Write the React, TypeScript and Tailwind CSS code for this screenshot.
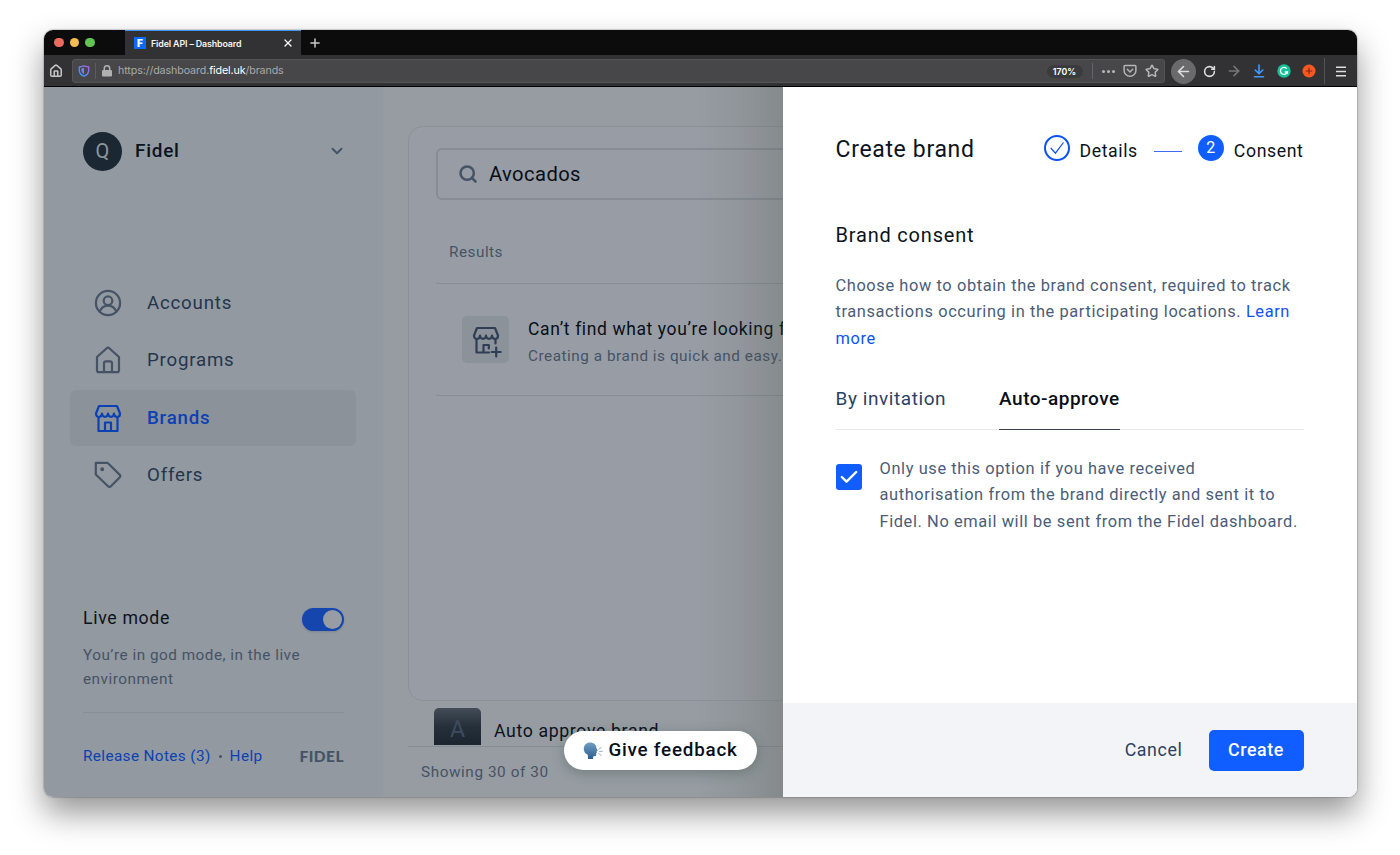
import React from "react";
import { ChevronDown, House, Plus, X, Star, ArrowLeft, ArrowRight, RotateCw, Search } from "lucide-react";

const stroke = {
  fill: "none",
  stroke: "currentColor",
  strokeWidth: 2.2,
  strokeLinecap: "round" as const,
  strokeLinejoin: "round" as const,
};

function StoreIcon({ plus = false }: { plus?: boolean }) {
  return (
    <svg viewBox="0 0 28 28" className="size-7 overflow-visible" {...stroke}>
      <path d="M5 2h18l3 7.500c0 2.200-1.200 3.500-2.900 3.500-1.800 0-2.900-1.200-3.100-3.500-.200 2.300-1.300 3.300-3 3.300s-2.800-1-3-3.300c-.200 2.300-1.300 3.300-3 3.300s-2.800-1-3-3.300C7.800 11.800 6.700 13 4.900 13 3.200 13 2 11.700 2 9.500z" />
      {plus ? (
        <path d="M4.500 14v12.500H17M23.500 14v3.500M11.500 26.500V19h5.300v3.500M24.200 21.500v9M19.700 26h9" />
      ) : (
        <path d="M4.500 14v13h19V14M11 27v-8.500h6V27" />
      )}
    </svg>
  );
}

function AccountIcon() {
  return (
    <svg viewBox="0 0 28 28" className="size-7" {...stroke}>
      <circle cx="14" cy="14" r="12.100" />
      <circle cx="14" cy="11.700" r="4.300" />
      <path d="M5.600 22.500c1.800-3.800 4.800-5.800 8.400-5.800s6.600 2 8.400 5.800" />
    </svg>
  );
}

function HomeIcon() {
  return (
    <svg viewBox="0 0 28 28" className="size-7" {...stroke}>
      <path d="M3 11 12.700 2.200a2 2 0 0 1 2.600 0L25 11V24.200a2 2 0 0 1-2 2H5a2 2 0 0 1-2-2z" />
      <path d="M10 26v-8.700a2 2 0 0 1 2-2h4a2 2 0 0 1 2 2V26" />
    </svg>
  );
}

function TagIcon() {
  return (
    <svg viewBox="0 0 28 28" className="size-7" {...stroke}>
      <path d="M1.800 1.800h11.700L25.600 13.600a2 2 0 0 1 0 2.800l-8.700 8.900a2 2 0 0 1-2.900 0L1.800 13.500z" />
      <circle cx="8.200" cy="8.200" r="1.200" fill="currentColor" strokeWidth="1.500" />
    </svg>
  );
}

function ShieldIcon() {
  return (
    <svg viewBox="0 0 12 12" className="size-3">
      <defs>
        <linearGradient id="shield" x1="1" y1="0" x2="0" y2="1">
          <stop offset="0" stopColor="#b35cf0" />
          <stop offset="1" stopColor="#28a5ff" />
        </linearGradient>
      </defs>
      <path d="M6 .9 10.700 2v3.200c0 2.800-1.800 4.800-4.700 6-2.900-1.200-4.700-3.200-4.700-6V2z" fill="none" stroke="url(#shield)" strokeWidth="1.400" />
      <path d="M6 3v6C4.300 8 3.400 6.800 3.400 5V3.500z" fill="#7a83f5" />
    </svg>
  );
}

function PocketIcon() {
  return (
    <svg viewBox="0 0 14 14" className="size-[14px]" fill="none" stroke="currentColor" strokeWidth="1.500" strokeLinecap="round" strokeLinejoin="round">
      <path d="M2 1.500h10c.500 0 .9.400.9.900v4a5.900 5.900 0 0 1-11.800 0v-4c0-.5.400-.9.900-.9zM4.300 5.300 7 8l2.700-2.700" />
    </svg>
  );
}

function SpeakingHead() {
  return (
    <svg viewBox="0 0 20 18" className="h-[18px] w-5">
      <defs>
        <linearGradient id="head" x1="0" y1="0" x2="0" y2="1">
          <stop offset="0" stopColor="#6f9dc3" />
          <stop offset="1" stopColor="#2d5f8e" />
        </linearGradient>
      </defs>
      <path d="M7 .5c3.800 0 6.200 2.200 6.300 5.200l1.400 3-1.100.7.200 1.300-.7.500.2 1.900c-.1 1.100-1.700 1.200-3 1.100l-.3 2.800H5l-.2-4.300C2.300 11.500.8 9.500.8 6.900.8 3 3.500.5 7 .5z" fill="url(#head)" />
      <path d="m15.800 7.200 2.400-1.600M16.300 9.400h3M15.800 11.600l2.400 1.700" stroke="#8fa6bb" strokeWidth=".9" strokeLinecap="round" />
    </svg>
  );
}

function TitleBar() {
  return (
    <div className="flex h-[25px] shrink-0 bg-[#0c0c0d]">
      <div className="flex w-[81px] items-center gap-1.5 pl-[10px]">
        <i className="size-[9.500px] rounded-full bg-[#ee6a5f]" />
        <i className="size-[9.500px] rounded-full bg-[#f5bd4f]" />
        <i className="size-[9.500px] rounded-full bg-[#61c454]" />
      </div>
      <div className="flex w-[176px] items-center border-t-[1.500px] border-[#3f97f5] bg-[#323234] pr-[7px] pl-[9px]">
        <div className="flex size-3 items-center justify-center bg-[#0a6cff] text-[10px] leading-3 font-black text-white">F</div>
        <span className="ml-[5px] pt-px text-[8.900px] font-semibold tracking-[-0.015em] text-[#f4f4f5]">Fidel API – Dashboard</span>
        <X className="ml-auto size-3 text-white" strokeWidth={2.600} />
      </div>
      <div className="flex items-center pl-[7px]">
        <Plus className="size-[14px] text-[#c9c9ca]" strokeWidth={2.600} />
      </div>
    </div>
  );
}

function ToolBar() {
  return (
    <div className="flex h-8 shrink-0 items-center border-b border-black bg-[#323234] pt-px text-[#c4c4c5]">
      <House className="ml-[5px] size-[14px]" strokeWidth={2.700} />
      <div className="ml-[9px] flex h-6 w-[1092.500px] items-center rounded-[3px] border border-[#555557] bg-[#474749]">
        <span className="ml-[5px] flex">
          <ShieldIcon />
        </span>
        <i className="ml-[5px] h-4 w-px bg-[#5d5d60]" />
        <svg viewBox="0 0 10 12" className="ml-[6px] h-3 w-[10px]" fill="#b0b0b1">
          <rect x="0" y="5" width="10" height="6.500" rx="1.200" />
          <path d="M2.300 6V3.500a2.700 2.700 0 0 1 5.400 0V6" fill="none" stroke="#b0b0b1" strokeWidth="1.500" />
        </svg>
        <span className="ml-[6px] pt-px text-[10.700px] tracking-[-0.010em] text-[#a8a8aa]">
          https://dashboard.<span className="text-white">fidel.uk</span>/brands
        </span>
        <span className="ml-auto flex h-[13px] w-9 items-center justify-center rounded-full bg-[#3b3b3d] pt-px text-[8.800px] font-semibold text-white">170%</span>
        <i className="ml-[9px] h-4 w-px bg-[#5e6673]" />
        <span className="ml-[9px] flex gap-[2px]">
          <i className="size-[3px] rounded-full bg-[#b4b4b5]" />
          <i className="size-[3px] rounded-full bg-[#b4b4b5]" />
          <i className="size-[3px] rounded-full bg-[#b4b4b5]" />
        </span>
        <span className="ml-2 flex text-[#b4b4b5]">
          <PocketIcon />
        </span>
        <Star className="mr-[5px] ml-2 size-[14px] text-[#b4b4b5]" strokeWidth={2.600} />
      </div>
      <div className="ml-1.5 flex size-[25px] items-center justify-center rounded-full bg-[#6a6a6c]">
        <ArrowLeft className="size-[17px] text-[#dddddd]" strokeWidth={2.300} />
      </div>
      <RotateCw className="ml-[7px] size-[13px] text-[#dcdcdc]" strokeWidth={2.900} />
      <ArrowRight className="ml-[10px] size-4 text-[#77777a]" strokeWidth={2.300} />
      <svg viewBox="0 0 12 14" className="ml-[11px] h-[14px] w-3" fill="none" stroke="#3f9bfd" strokeWidth="1.600" strokeLinecap="round" strokeLinejoin="round">
        <path d="M6 1v8.500M2.200 6 6 9.800 9.800 6M1.500 12.800h9" />
      </svg>
      <svg viewBox="0 0 14 14" className="ml-3 size-[14px]">
        <circle cx="7" cy="7" r="6.700" fill="#15c39a" />
        <path d="M9.600 4.600A3.500 3.500 0 1 0 10.300 8H7.800M10.400 8v1.700" fill="none" stroke="#fff" strokeWidth="1.300" />
      </svg>
      <svg viewBox="0 0 14 14" className="ml-[11px] size-[14px]">
        <circle cx="7" cy="7" r="6.500" fill="#ff5722" />
        <path d="M7 3.700v6.600M3.700 7h6.600" stroke="#7c2a12" strokeWidth="1.200" />
      </svg>
      <i className="ml-2 h-[26px] w-px bg-[#545456]" />
      <svg viewBox="0 0 10 11" className="ml-[11px] h-[11px] w-[10px]" stroke="#dcdcdc" strokeWidth="1.500">
        <path d="M0 1.200h10M0 5.500h10M0 9.800h10" />
      </svg>
    </div>
  );
}

const navItems = [
  { label: "Accounts", icon: <AccountIcon />, active: false },
  { label: "Programs", icon: <HomeIcon />, active: false },
  { label: "Brands", icon: <StoreIcon />, active: true },
  { label: "Offers", icon: <TagIcon />, active: false },
];

function Sidebar() {
  return (
    <aside className="flex w-[339px] shrink-0 flex-col bg-[#9299a0] px-[39px] pt-[44px]">
      <div className="flex h-10 items-center">
        <div className="flex size-[39px] items-center justify-center rounded-full bg-[#1b2733] text-[20px] text-[#8f969e]">Q</div>
        <span className="ml-[13px] text-[18.900px] font-medium tracking-[0.040em] text-[#0b1320]">Fidel</span>
        <ChevronDown className="-mr-[1.500px] ml-auto size-[18px] text-[#46546a]" strokeWidth={2.700} />
      </div>
      <nav className="mt-[104px] -mr-[26px] -ml-[13px] flex w-[286px] flex-col gap-[1px]">
        {navItems.map((item) => (
          <a
            key={item.label}
            className={
              item.active
                ? "flex h-[56.300px] items-center rounded-md bg-[#8b9299] pl-6 font-medium text-[#0c41b4]"
                : "flex h-[56.300px] items-center rounded-md pl-6 text-[#25364c]"
            }
          >
            <span className={item.active ? "flex" : "flex text-[#465366]"}>{item.icon}</span>
            <span className="ml-[25px] text-[18.700px] tracking-[0.042em]">{item.label}</span>
          </a>
        ))}
      </nav>
      <div className="mt-[103px] flex h-6 items-center justify-between">
        <span className="text-[17.700px] tracking-[0.038em] text-[#0b1320]">Live mode</span>
        <div className="mt-[2px] flex h-[23px] w-[42px] items-center justify-end rounded-full bg-[#1546ad] p-[2px] shadow-sm">
          <i className="size-[19px] rounded-full bg-[#989da5]" />
        </div>
      </div>
      <p className="mt-[12.500px] text-[15.300px] leading-[24.600px] tracking-[0.033em] whitespace-nowrap text-[#465366]">
        You’re in god mode, in the live
        <br />
        environment
      </p>
      <div className="mt-[20.500px] h-px w-[261px] bg-[#868e97]" />
      <div className="mt-[31px] flex h-6 w-[261px] items-center text-[15.300px] tracking-[0.025em] text-[#0c41b4]">
        <span>Release Notes (3)</span>
        <i className="mx-2 size-[3px] rounded-full bg-[#46546a]" />
        <span>Help</span>
        <span className="ml-auto pt-px font-['Lato',sans-serif] text-[15.500px] font-black tracking-[0.030em] text-[#465366]">FIDEL</span>
      </div>
    </aside>
  );
}

function Main() {
  return (
    <main className="relative flex w-[400px] shrink-0 flex-col overflow-hidden bg-[#969ca2] pl-[25px]">
      <section className="mt-[39px] h-[575px] w-[460px] shrink-0 rounded-[15px] border-[1.500px] border-[#8b9198] bg-[#989da5] pl-[27px]">
        <div className="mt-[21px] flex h-[52px] items-center rounded-md border-2 border-[#868d96] pl-5">
          <Search className="size-5 text-[#465366]" strokeWidth={3} />
          <span className="ml-[11px] text-[20.200px] tracking-[0.020em] text-[#080f1a]">Avocados</span>
        </div>
        <div className="mt-10 pl-[13px] text-[15.300px] leading-6 tracking-[0.033em] text-[#465366]">Results</div>
        <div className="mt-[19px] flex h-[113px] items-center border-y border-[#868d96] pl-[26px]">
          <div className="flex size-[47px] shrink-0 items-center justify-center rounded-[5px] bg-[#8b9299] text-[#2f3e54]">
            <StoreIcon plus />
          </div>
          <div className="ml-[19px] pt-[6px] whitespace-nowrap">
            <div className="text-[17.500px] leading-[27px] tracking-[0.035em] text-[#080f1a]">Can’t find what you’re looking for?</div>
            <div className="text-[15.300px] leading-[27px] tracking-[0.035em] text-[#465366]">Creating a brand is quick and easy.</div>
          </div>
        </div>
      </section>
      <div className="mt-[7px] flex h-[39px] w-[460px] shrink-0 border-b border-[#868d96] pl-[26px]">
        <div className="flex h-[37px] w-[47px] items-center justify-center rounded-t-[5px] bg-linear-to-b from-[#434c57] via-[#26303b] to-[#1a2530] pt-2 text-[23px] text-[#3f4b5e]">A</div>
        <span className="ml-[13px] pt-[9px] text-[17.700px] leading-7 tracking-[0.036em] text-[#0b1320]">Auto approve brand</span>
      </div>
      <div className="mt-[13px] pl-[13px] text-[15.300px] leading-6 tracking-[0.038em] text-[#465366]">Showing 30 of 30</div>
      <div className="absolute inset-y-0 right-0 w-[88px] bg-linear-to-r from-[#464a3c]/0 via-[#464a3c]/8 to-[#464a3c]/22" />
    </main>
  );
}

function Drawer() {
  return (
    <div className="flex min-w-0 flex-1 flex-col bg-white">
      <div className="flex-1 px-[53px] pt-[46px] pl-[52.500px]">
        <header className="flex h-8 items-center">
          <h1 className="pt-[2px] text-[23px] tracking-[0.029em] text-[#0b1320]">Create brand</h1>
          <div className="ml-auto flex items-center text-[17.700px] tracking-[0.034em] text-[#0b1320]">
            <svg viewBox="0 0 26 26" className="-mt-px size-[26px]" fill="none" stroke="#0b52f5">
              <circle cx="13" cy="13" r="12" strokeWidth="2" />
              <path d="m6.800 13 4.600 5.200L19.500 7.500" strokeWidth="1.200" />
            </svg>
            <span className="ml-[10px] pt-[4px]">Details</span>
            <i className="mt-[5px] ml-4 h-[1.500px] w-7 bg-[#3b6cf7]" />
            <span className="-mt-px ml-4 flex size-[26px] items-center justify-center rounded-full bg-[#105eff] text-[16px] tracking-normal text-white">2</span>
            <span className="ml-[10px] pt-[4px]">Consent</span>
          </div>
        </header>
        <h2 className="mt-[55px] text-[20px] leading-[30px] tracking-[0.040em] text-[#0b1320]">Brand consent</h2>
        <p className="mt-[22.500px] text-[16.400px] leading-[26.700px] tracking-[0.037em] whitespace-nowrap text-[#4b5d78]">
          Choose how to obtain the brand consent, required to track
          <br />
          transactions occuring in the participating locations. <span className="text-[#0f52f5]">Learn</span>
          <br />
          <span className="text-[#0f52f5]">more</span>
        </p>
        <div className="mt-[32.500px] flex h-[45px] border-b border-[#e8eaee] text-[19px] leading-7 tracking-[0.030em]">
          <span className="h-[45px] text-[#2c4264]">By invitation</span>
          <span className="ml-[53px] h-[45px] border-b border-[#3a4150] font-medium tracking-[0.026em] text-[#080f1a]">Auto-approve</span>
        </div>
        <div className="mt-[25px] flex">
          <div className="mt-[9px] flex size-[26px] shrink-0 items-center justify-center rounded-[3px] bg-[#105eff]">
            <svg viewBox="0 0 18 14" className="h-[14px] w-[18px]" fill="none" stroke="#fff" strokeWidth="2.400" strokeLinecap="round" strokeLinejoin="round">
              <path d="m1.800 7 4.700 4.700L16.200 2" />
            </svg>
          </div>
          <p className="ml-[18px] pt-[0.700px] text-[16.400px] leading-[26.600px] tracking-[0.037em] whitespace-nowrap text-[#4b5d78]">
            Only use this option if you have received
            <br />
            authorisation from the brand directly and sent it to
            <br />
            Fidel. No email will be sent from the Fidel dashboard.
          </p>
        </div>
      </div>
      <footer className="flex h-[94px] items-center justify-end gap-[26px] bg-[#f3f4f7] pr-[53px] text-[17.800px] tracking-[0.035em]">
        <span className="text-[#2c4264]">Cancel</span>
        <button className="h-[41px] w-[95px] rounded-[5px] bg-[#105eff] font-medium text-white">Create</button>
      </footer>
    </div>
  );
}

export default function App() {
  return (
    <div className="h-[855px] w-[1400px] overflow-hidden bg-white pt-[30px] pl-[44px] font-['Inter',sans-serif]">
      <div className="h-[767px] w-[1312.500px] rounded-[9px] shadow-[0_0_1px_1px_rgba(0,0,0,0.160),0_16px_32px_rgba(0,0,0,0.420)]">
        <div className="flex h-full flex-col overflow-hidden rounded-[9px]">
          <TitleBar />
          <ToolBar />
          <div className="relative flex flex-1 overflow-hidden font-['Roboto',sans-serif] font-normal">
            <Sidebar />
            <Main />
            <Drawer />
            <div className="absolute top-[644px] left-[520px] flex h-[39px] w-[193px] items-center justify-center rounded-full bg-white text-[18.800px] font-medium tracking-[0.042em] text-[#080f1a] shadow-[0_3px_12px_rgba(50,70,60,0.350)]">
              <SpeakingHead />
              <span className="ml-[5px]">Give feedback</span>
            </div>
          </div>
        </div>
      </div>
    </div>
  );
}
